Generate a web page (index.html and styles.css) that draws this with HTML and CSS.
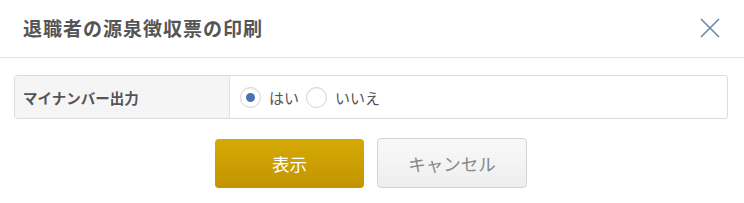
FILE: index.html
```html
<!DOCTYPE html>
<html lang="ja">
<head>
  <meta charset="UTF-8">
  <meta name="viewport" content="width=device-width, initial-scale=1.0">
  <title>退職者の源泉徴収票の印刷</title>
  <link rel="stylesheet" href="styles.css">
</head>
<body>
  <div class="dialog">
    <div class="dialog_head">
      <h1 class="dialog_title">退職者の源泉徴収票の印刷</h1>
      <button class="dialog_close" type="button" aria-label="閉じる">
        <svg width="20" height="20" viewBox="0 0 20 20">
          <path d="M1 1 L19 19 M19 1 L1 19" stroke="#6c86ab" stroke-width="1.6" fill="none"/>
        </svg>
      </button>
    </div>
    <div class="dialog_body">
      <div class="form_row">
        <div class="form_label">マイナンバー出力</div>
        <div class="form_value">
          <label class="radio"><input type="radio" name="mynumber" checked><span class="radio_mark"></span>はい</label>
          <label class="radio"><input type="radio" name="mynumber"><span class="radio_mark"></span>いいえ</label>
        </div>
      </div>
      <div class="btn_area">
        <button class="btn btn_primary" type="button">表示</button>
        <button class="btn btn_cancel" type="button">キャンセル</button>
      </div>
    </div>
  </div>
</body>
</html>
```

FILE: styles.css
```css
* {margin: 0; padding: 0; box-sizing: border-box;}
body {font-family: "Noto Sans CJK JP", "Noto Sans", sans-serif; color: #555; background: #fff;}

.dialog {width: 744px;}
.dialog_head {height: 58px; display: flex; align-items: center; justify-content: space-between; padding: 0 23px 2px 23px; border-bottom: 1px solid #e3e3e3;}
.dialog_title {font-size: 19px; font-weight: bold; color: #555; letter-spacing: 1px;}
.dialog_close {border: 0; background: none; width: 20px; height: 20px; margin-right: 1px; cursor: pointer; display: flex;}

.dialog_body {padding: 17px 16px 0 14px;}
.form_row {display: flex; height: 44px; border: 1px solid #dcdcdc; border-radius: 3px; overflow: hidden;}
.form_label {width: 215px; background: #f5f5f5; border-right: 1px solid #e2e2e2; display: flex; align-items: center; padding-left: 8px; font-size: 14.5px; font-weight: bold; color: #555;}
.form_value {flex: 1; display: flex; align-items: center; padding-left: 10px;}

.radio {display: flex; align-items: center; font-size: 15px; color: #555; margin-right: 7px; cursor: pointer;}
.radio input {display: none;}
.radio_mark {width: 21px; height: 21px; border: 1px solid #d2d2d2; border-radius: 50%; background: #fff; margin-right: 8px; display: flex; align-items: center; justify-content: center; box-shadow: inset 0 1px 1px rgba(0,0,0,0.05);}
.radio input:checked + .radio_mark::after {content: ""; width: 9px; height: 9px; border-radius: 50%; background: #4a72b0;}

.btn_area {display: flex; justify-content: center; gap: 13px; margin-top: 19px;}
.btn {width: 150px; height: 50px; border-radius: 4px; font-family: inherit; font-size: 17.5px; cursor: pointer;}
.btn_primary {border: 0; background: linear-gradient(#d5aa06, #c39400); color: #fff; margin-top: 1px; height: 49px; width: 149px;}
.btn_cancel {border: 1px solid #d4d4d4; background: linear-gradient(#f9f9f9, #eeeeee); color: #888;}
```
